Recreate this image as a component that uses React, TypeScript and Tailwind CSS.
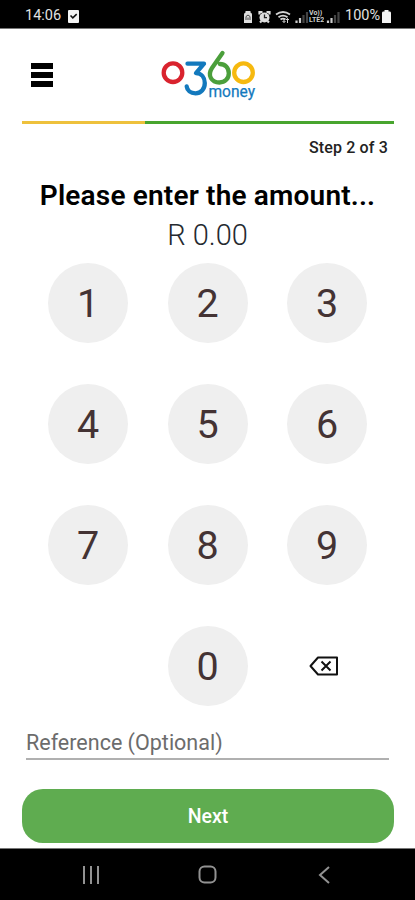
import { useState } from "react";

const KEYS = ["1", "2", "3", "4", "5", "6", "7", "8", "9"];

function StatusBar() {
  return (
    <div className="flex h-[29px] shrink-0 items-center justify-between border-b border-[#777] bg-black pl-[25px] pr-[24px] pt-1 text-[#e2e2e2]">
      <div className="flex items-center gap-[7px] pt-px">
        <span className="text-[14.5px] leading-none">14:06</span>
        <svg width="11" height="13" viewBox="0 0 11 13">
          <rect width="11" height="13" rx="1" fill="#f4f4f4" />
          <path d="M2.5 5.5l2.3 2.3 3.9-3.6" fill="none" stroke="#111" strokeWidth="1.6" />
        </svg>
      </div>
      <div className="flex items-center pt-px">
        <div className="relative h-4 w-[102px]">
          <svg width="102" height="16" viewBox="0 0 102 16" fill="none">
            <path d="M1 5.5Q1 4 2.5 3.5V2h5v1.5Q9 4 9 5.5V14H1z" fill="#dedede" />
            <path d="M3 11V7.500L5 6l2 1.500V11M5 8.500V11" stroke="#444" />
            <circle cx="21.5" cy="8.5" r="5" fill="#dedede" />
            <path d="M16.500 5.500V3h3M26.500 5.500V3h-3M17 13.500l1.500-1.500M26 13.500L24.500 12" stroke="#dedede" strokeWidth="2.200" />
            <path d="M21.500 5.500v3.200h2.500" stroke="#222" strokeWidth="1.300" />
            <path d="M33 5.500q7-5 14 0M35.500 8.200q4.500-3.200 9 0M37.500 10.500q2.500-1.800 5 0" stroke="#d4d4d4" strokeWidth="1.800" />
            <path d="M41 9v4.500M39.500 12l1.500 1.500 1.500-1.500M44.500 14V9.500M43 11l1.500-1.500L46 11" stroke="#d4d4d4" strokeWidth="1" />
            <path d="M53.500 14v-2.500M57 14V9" stroke="#ccc" strokeWidth="2.200" />
            <path d="M60.500 14V6M64 14V3" stroke="#444" strokeWidth="2.200" />
            <path d="M85 14v-2.500M88.500 14V9" stroke="#ccc" strokeWidth="2.200" />
            <path d="M92 14V6M95.500 14V3" stroke="#444" strokeWidth="2.200" />
          </svg>
          <div className="absolute left-[66px] top-[1px] flex flex-col text-[7px] font-bold leading-[7px] text-[#ccc]">
            <span className="h-[7px] overflow-hidden">Vo))</span>
            <span className="h-[7px] overflow-hidden">LTE2</span>
          </div>
        </div>
        <span className="w-[37px] text-[14.5px] leading-none">100%</span>
        <svg width="9" height="13" viewBox="0 0 9 13">
          <path d="M2.500 0h4v1.500H8Q9 1.500 9 3v10H0V3q0-1.500 1-1.500h1.500z" fill="#f2f2f2" />
        </svg>
      </div>
    </div>
  );
}

function Logo() {
  return (
    <svg width="96" height="54" viewBox="160 49 96 54" fill="none" strokeWidth="4.300">
      <circle cx="173" cy="72.700" r="9.300" stroke="#d9232e" />
      <path
        d="M187.500 63.700H204L196 73.200C201.500 73.500 204.800 77.500 204.800 83C204.800 89.200 200.800 93.300 195.500 93.300C190.500 93.300 187.200 90.500 186.700 86.500"
        stroke="#1379bd"
        strokeLinecap="round"
        strokeLinejoin="round"
      />
      <circle cx="243.500" cy="72.700" r="9.300" stroke="#f6b90f" />
      <path
        d="M222.500 53L212 68C207 75.500 211.500 82.500 219.500 82.500C225 82.500 228.800 78.500 228.800 73.200C228.800 67.800 225 64 219.800 64"
        stroke="#4b9f3b"
        strokeLinecap="round"
      />
      <text x="208.500" y="97.300" fill="#1379bd" fontSize="16" stroke="#1379bd" strokeWidth="0.250" textLength="46.500" lengthAdjust="spacingAndGlyphs">
        money
      </text>
    </svg>
  );
}

function NavBar() {
  return (
    <div className="flex h-[52px] shrink-0 items-center justify-between border-t border-[#777] bg-black pl-[82px] pr-[85px] text-[#929292]">
      <svg width="18" height="18" viewBox="0 0 18 18" stroke="currentColor" strokeWidth="2">
        <path d="M2 0v18M9 0v18M16 0v18" />
      </svg>
      <svg className="mr-[3px]" width="19" height="19" viewBox="0 0 19 19" fill="none" stroke="currentColor" strokeWidth="2">
        <rect x="1.500" y="1.500" width="16" height="16" rx="5" />
      </svg>
      <svg width="12" height="18" viewBox="0 0 12 18" fill="none" stroke="currentColor" strokeWidth="2">
        <path d="M11 1L2 9l9 8" />
      </svg>
    </div>
  );
}

export default function App() {
  const [cents, setCents] = useState(0);
  const [reference, setReference] = useState("");

  const handleKey = (key: string) => {
    setCents((prev) => (prev > 9999999 ? prev : prev * 10 + Number(key)));
  };

  const keyClass = "flex size-20 items-center justify-center rounded-full bg-[#efefef] pt-[2px] text-[39.5px] leading-none text-[#443334]";

  return (
    <div className="flex h-[900px] w-[415px] flex-col overflow-hidden bg-white font-['Roboto',sans-serif] text-black">
      <StatusBar />

      <header className="flex h-[92px] shrink-0 items-start pl-[31px] pt-5">
        <button aria-label="Menu" className="mt-[14px] flex w-[22px] flex-col gap-[3px]">
          <span className="h-[6px] bg-black" />
          <span className="h-[6px] bg-black" />
          <span className="h-[6px] bg-black" />
        </button>
        <div className="ml-[107px]">
          <Logo />
        </div>
      </header>

      <div className="ml-[22px] mr-[21px] flex h-[3px] shrink-0">
        <div className="w-[123px] bg-[#eec13c]" />
        <div className="flex-1 bg-[#48a52e]" />
      </div>

      <p className="mr-[27px] mt-3 h-6 text-right text-[16px] font-medium leading-6 tracking-[0.15px] text-[#222]">Step 2 of 3</p>

      <h1 className="mt-[18px] h-9 whitespace-nowrap text-center text-[28px] font-semibold leading-9 tracking-[0.18px]">Please enter the amount...</h1>
      <p className="mt-[3px] h-9 text-center text-[29px] font-light leading-9 text-[#252a30]">R {(cents / 100).toFixed(2)}</p>

      <div className="ml-12 mt-[10px] grid w-[319px] shrink-0 grid-cols-3 gap-x-[39.500px] gap-y-[41px]">
        {KEYS.map((key) => (
          <button key={key} onClick={() => handleKey(key)} className={keyClass}>
            {key}
          </button>
        ))}
        <span />
        <button onClick={() => handleKey("0")} className={keyClass}>
          0
        </button>
        <button
          aria-label="Delete"
          onClick={() => setCents((prev) => Math.floor(prev / 10))}
          className="flex size-20 items-center justify-center pr-[6px]"
        >
          <svg width="30" height="20" viewBox="0 0 30 20" fill="none" stroke="#111" strokeWidth="2">
            <path d="M9 1.500H28V18.500H9L1.500 10z" strokeLinejoin="round" />
            <path d="M12.500 5.500l9 9M21.500 5.500l-9 9" />
          </svg>
        </button>
      </div>

      <input
        type="text"
        placeholder="Reference (Optional)"
        value={reference}
        onChange={(e) => setReference(e.target.value)}
        className="mx-[26px] mt-[20px] h-[34px] shrink-0 border-b-2 border-[#b0b0b0] text-[21.5px] outline-none placeholder:text-[#6c6c6c]"
      />

      <button className="ml-[22px] mr-[21px] mt-[29px] h-[54px] shrink-0 rounded-[21px] bg-[#5fac50] pt-px text-[19.5px] font-medium text-white">Next</button>

      <div className="mt-auto">
        <NavBar />
      </div>
    </div>
  );
}
